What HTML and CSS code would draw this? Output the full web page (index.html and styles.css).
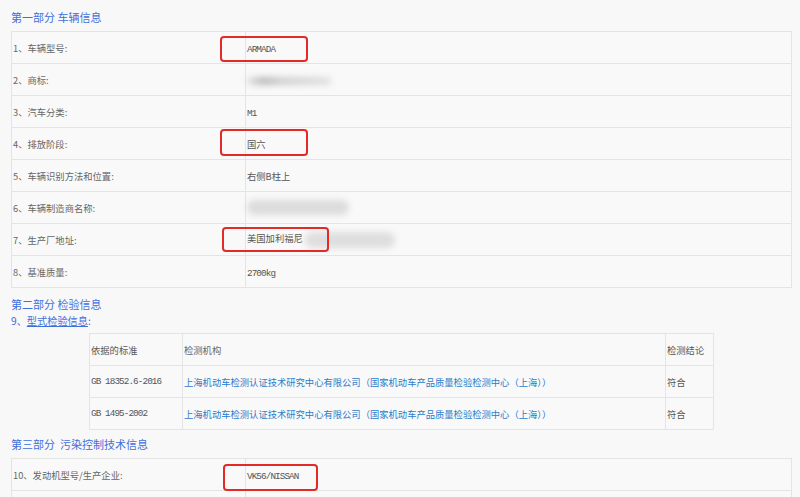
FILE: index.html
```html
<!DOCTYPE html>
<html lang="zh-CN">
<head>
    <meta charset="UTF-8">
    <title>车辆信息公开</title>
    <link rel="stylesheet" href="styles.css">
</head>
<body>
    <h3 class="part first">第一部分 车辆信息</h3>
    <table class="info">
        <tr>
            <td class="label">1、车辆型号:</td>
            <td class="value"><span class="en">ARMADA</span><span class="mark m1"></span></td>
        </tr>
        <tr>
            <td class="label">2、商标:</td>
            <td class="value"><span class="blur b2"></span></td>
        </tr>
        <tr>
            <td class="label">3、汽车分类:</td>
            <td class="value"><span class="en">M1</span></td>
        </tr>
        <tr>
            <td class="label">4、排放阶段:</td>
            <td class="value">国六<span class="mark m4"></span></td>
        </tr>
        <tr>
            <td class="label">5、车辆识别方法和位置:</td>
            <td class="value">右侧B柱上</td>
        </tr>
        <tr>
            <td class="label">6、车辆制造商名称:</td>
            <td class="value"><span class="blur b6"></span></td>
        </tr>
        <tr>
            <td class="label">7、生产厂地址:</td>
            <td class="value">美国加利福尼<span class="blur b7"></span><span class="mark m7"></span></td>
        </tr>
        <tr>
            <td class="label">8、基准质量:</td>
            <td class="value"><span class="en">2700kg</span></td>
        </tr>
    </table>

    <h3 class="part second">第二部分 检验信息</h3>
    <p class="sub">9、<u>型式检验信息</u>:</p>
    <table class="check">
        <tr>
            <td class="std">依据的标准</td>
            <td class="org">检测机构</td>
            <td class="res">检测结论</td>
        </tr>
        <tr>
            <td class="std en">GB 18352.6-2016</td>
            <td class="org"><a href="#">上海机动车检测认证技术研究中心有限公司（国家机动车产品质量检验检测中心（上海））</a></td>
            <td class="res">符合</td>
        </tr>
        <tr>
            <td class="std en">GB 1495-2002</td>
            <td class="org"><a href="#">上海机动车检测认证技术研究中心有限公司（国家机动车产品质量检验检测中心（上海））</a></td>
            <td class="res">符合</td>
        </tr>
    </table>

    <h3 class="part third">第三部分&nbsp;&nbsp;污染控制技术信息</h3>
    <table class="info">
        <tr>
            <td class="label">10、发动机型号/生产企业:</td>
            <td class="value"><span class="en">VK56/NISSAN</span><span class="mark m10"></span></td>
        </tr>
        <tr>
            <td class="label"></td>
            <td class="value"></td>
        </tr>
    </table>
</body>
</html>
```

FILE: styles.css
```css
body {
    margin: 0;
    padding: 0 8px 0 11px;
    background-color: #f8f8f8;
    color: #666666;
    font-family: "Noto Sans CJK SC", sans-serif;
    font-size: 9.3px;
    overflow: hidden;
}

.en {
    font-family: "Liberation Mono", "Noto Sans CJK SC", monospace;
    letter-spacing: -0.9px;
}

.part {
    margin: 9px 0 7px;
    font-size: 11px;
    font-weight: normal;
    line-height: 14px;
    color: #3f6fdc;
}

.part.first {
    margin-top: 10px;
}

.part.second {
    margin-bottom: 3px;
}

.part.third {
    margin-top: 7px;
}

.sub {
    margin: 3px 0 5px;
    line-height: 14px;
    font-size: 10.2px;
    color: #3f6fdc;
}

table {
    border-collapse: collapse;
    background-color: #f9f9f9;
}

td {
    border: 1px solid #e4e4e4;
    padding: 0 0 0 1px;
    height: 31px;
    vertical-align: middle;
}

.info {
    width: 781px;
}

.info .label {
    width: 232px;
}

.info .value {
    position: relative;
    color: #555555;
}

.check {
    margin-left: 78px;
    width: 625px;
}

.check .std {
    width: 91px;
    color: #555555;
}

.check .org {
    width: 481px;
}

.check .org a {
    color: #2b7cc9;
    text-decoration: none;
}

.check .res {
    color: #555555;
}

.mark {
    position: absolute;
    border: 2px solid #e42a26;
    border-radius: 4px;
    box-sizing: border-box;
}

.m1 { left: -26px; top: 4px; width: 88px; height: 26px; }
.m4 { left: -26px; top: 1px; width: 88px; height: 27px; }
.m7 { left: -24px; top: 3px; width: 107px; height: 25px; }
.m10 { left: -23px; top: 5px; width: 95px; height: 27px; }

.blur {
    display: inline-block;
    vertical-align: middle;
    background-color: #d6d6d6;
    border-radius: 8px;
    filter: blur(3px);
}

.b2 {
    width: 84px;
    height: 8px;
    background: linear-gradient(90deg, #e4e4e4 0%, #b9b9b9 20%, #cfcfcf 40%, #e0e0e0 100%);
}

.b6 {
    width: 102px;
    height: 15px;
    background-color: #dcdcdc;
}

.b7 {
    width: 90px;
    height: 16px;
    margin-left: 2px;
    background-color: #dedede;
}
```
